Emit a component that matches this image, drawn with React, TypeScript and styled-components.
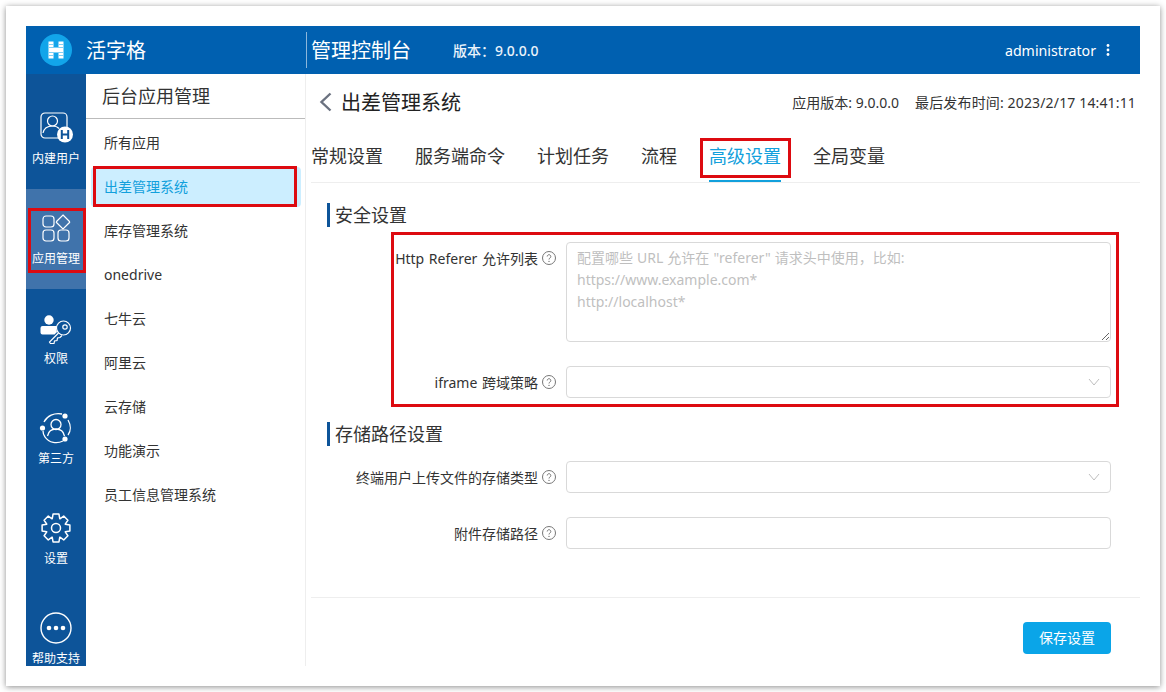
import React from 'react'
import styled, { createGlobalStyle } from 'styled-components'

const GlobalStyle = createGlobalStyle`
  html, body {
    margin: 0;
    padding: 0;
    background: #fff;
  }
  * {
    box-sizing: border-box;
  }
  body {
    font-family: "Noto Sans", "Noto Sans CJK SC", sans-serif;
    font-size: 14px;
    color: #333;
  }
`

const Frame = styled.div`
  margin: 6px;
  width: 1154px;
  height: 680px;
  padding: 20px;
  background: #fff;
  box-shadow: 0 1px 6px rgba(0, 0, 0, 0.45);
`

const Shell = styled.div`
  position: relative;
  width: 1114px;
  height: 640px;
  display: flex;
  flex-direction: column;
  overflow: hidden;
`

const Header = styled.header`
  flex: 0 0 48px;
  display: flex;
  align-items: center;
  background: #0060b0;
  color: #fff;
`

const Brand = styled.div`
  width: 280px;
  display: flex;
  align-items: center;
  padding: 0 0 1px 14px;
  gap: 14px;
  font-size: 20px;
`

const Console = styled.div`
  height: 36px;
  display: flex;
  align-items: center;
  border-left: 1px solid rgba(255, 255, 255, 0.55);
  padding: 0 0 2px 4px;
  font-size: 20px;
`

const Version = styled.span`
  margin-left: 42px;
  font-size: 14px;
  font-weight: 500;
  color: #eaf3fb;
`

const User = styled.div`
  margin-left: auto;
  padding-right: 30px;
  display: flex;
  align-items: center;
  gap: 10px;
  font-size: 14.2px;
`

const Body = styled.div`
  flex: 1;
  display: flex;
  min-height: 0;
`

const Rail = styled.nav`
  flex: 0 0 60px;
  padding-top: 15px;
  background: #0d5499;
  overflow: hidden;
`

const RailItem = styled.div<{ $active?: boolean }>`
  height: 100px;
  padding-top: 20px;
  display: flex;
  flex-direction: column;
  align-items: center;
  background: ${p => (p.$active ? '#4073ab' : 'transparent')};
  color: #fff;
`

const RailIcon = styled.div`
  height: 38px;
  display: flex;
  align-items: center;
  justify-content: center;
`

const RailLabel = styled.span`
  margin-top: 3px;
  font-size: 12px;
  line-height: 18px;
  white-space: nowrap;
`

const SidePanel = styled.aside`
  flex: 0 0 220px;
  border-right: 1px solid #eee;
`

const SideTitle = styled.div`
  height: 45px;
  padding: 0 0 3px 16px;
  display: flex;
  align-items: center;
  border-bottom: 1px solid #bbb;
  font-size: 18px;
`

const SideList = styled.div`
  padding-top: 4px;
  display: flex;
  flex-direction: column;
  gap: 4px;
`

const SideItem = styled.div<{ $active?: boolean }>`
  height: 40px;
  margin: 0 4px 0 5px;
  padding: 0 0 2px 13px;
  display: flex;
  align-items: center;
  border-radius: 4px;
  background: ${p => (p.$active ? '#cceeff' : 'transparent')};
  color: ${p => (p.$active ? '#12a0dc' : '#333')};
`

const Main = styled.main`
  flex: 1;
  padding-left: 5px;
  display: flex;
  flex-direction: column;
  min-width: 0;
`

const TitleRow = styled.div`
  flex: 0 0 58px;
  display: flex;
  align-items: center;
  padding: 0 4px 3px 8px;
`

const PageTitle = styled.h1`
  margin: 0 0 0 9px;
  font-size: 20px;
  font-weight: 400;
  color: #222;
`

const Meta = styled.div`
  margin-left: auto;
  display: flex;
  gap: 16px;
  color: #333;
`

const MetaItem = styled.span<{ $spread?: boolean }>`
  letter-spacing: ${p => (p.$spread ? '0.15px' : '0')};
`

const Tabs = styled.div`
  flex: 0 0 50px;
  display: flex;
  gap: 32px;
  border-bottom: 1px solid #eee;
`

const Tab = styled.div<{ $active?: boolean }>`
  height: 50px;
  line-height: 49px;
  font-size: 18px;
  color: ${p => (p.$active ? '#12a0dc' : '#333')};
  border-bottom: 2px solid ${p => (p.$active ? '#12a0dc' : 'transparent')};
`

const Content = styled.div`
  padding: 20px 0 0 16px;
`

const SectionTitle = styled.h2`
  margin: 0 0 15px;
  height: 24px;
  line-height: 25px;
  padding-left: 5px;
  border-left: 3px solid #0d5499;
  font-size: 18px;
  font-weight: 400;
`

const Row = styled.div`
  display: flex;
  gap: 10px;
  margin-bottom: 24px;
`

const Label = styled.div`
  width: 229px;
  height: 32px;
  display: flex;
  align-items: center;
  justify-content: flex-end;
  gap: 4px;
  padding-bottom: 1px;
  word-spacing: 1px;
  white-space: nowrap;
`

const Notes = styled.textarea`
  display: block;
  width: 545px;
  height: 100px;
  padding: 4px 10px;
  border: 1px solid #d9d9d9;
  border-radius: 4px;
  font-family: inherit;
  font-size: 14px;
  line-height: 22px;
  word-spacing: 0.4px;
  outline: none;
  &::placeholder {
    color: #bfbfbf;
    opacity: 1;
  }
`

const Field = styled.div`
  width: 545px;
  height: 32px;
  padding-right: 10px;
  display: flex;
  align-items: center;
  justify-content: flex-end;
  border: 1px solid #d9d9d9;
  border-radius: 4px;
  background: #fff;
`

const Footer = styled.div`
  margin-top: 24px;
  padding: 24px 29px 0 0;
  display: flex;
  justify-content: flex-end;
  border-top: 1px solid #eee;
`

const SaveButton = styled.button`
  width: 88px;
  height: 32px;
  padding: 0 0 2px;
  border: 0;
  border-radius: 4px;
  background: #0aa5e8;
  color: #fff;
  font-family: inherit;
  font-size: 14px;
`

const Highlight = styled.div<{ $x: number; $y: number; $w: number; $h: number }>`
  position: absolute;
  left: ${p => p.$x}px;
  top: ${p => p.$y}px;
  width: ${p => p.$w}px;
  height: ${p => p.$h}px;
  border: 3px solid #dd0a10;
  pointer-events: none;
`

const Logo = () => (
  <svg width="32" height="32" viewBox="0 0 32 32">
    <circle cx="16" cy="16" r="16" fill="#12a5ea" />
    <path d="M8.5 7.500h5V14h5V7.500h5v17h-5V18h-5v6.500h-5z" fill="#fff" />
    <path d="M8.500 10.500h5M18.500 10.500h5M8.500 13.500h15M8.500 18.500h15M8.500 21.500h5M18.500 21.500h5" stroke="#7fd0f5" strokeWidth="1" />
  </svg>
)

const UserIcon = () => (
  <svg width="34" height="32" viewBox="0 0 34 32" fill="none" stroke="#fff" strokeWidth="1.2">
    <path d="M22 26H6a4 4 0 0 1-4-4V5a4 4 0 0 1 4-4h18a4 4 0 0 1 4 4v13" />
    <circle cx="13.5" cy="9" r="5" />
    <path d="M4 21c1-5 5-7 9.5-7 2.5 0 5 .8 6.5 2.5" />
    <circle cx="26" cy="22.5" r="8" fill="#fff" stroke="none" />
    <path d="M22.8 18v9M29.2 18v9M22.8 22.5h6.4" stroke="#0d5499" strokeWidth="2" />
  </svg>
)

const AppsIcon = () => (
  <svg width="30" height="28" viewBox="0 0 30 28" fill="none" stroke="#fff" strokeWidth="1.2">
    <rect x="2" y="2" width="11" height="11" rx="3" />
    <rect x="2" y="16" width="11" height="11" rx="3" />
    <rect x="17" y="16" width="11" height="11" rx="3" />
    <path d="M22 1l6.5 6.5a.8.8 0 0 1 0 1L22 15l-6.5-6.500a.8.8 0 0 1 0-1z" />
  </svg>
)

const KeyIcon = () => (
  <svg width="32" height="32" viewBox="0 -3 32 32">
    <circle cx="9" cy="5" r="4.7" fill="#fff" />
    <path d="M2.5 11H17c-1 2-1 4 0 6l-2.5 2.500H2.500A2 2 0 0 1 .5 17.500V13a2 2 0 0 1 2-2z" fill="#fff" />
    <g fill="none" stroke="#fff" strokeWidth="1.2">
      <circle cx="23.5" cy="13" r="7" />
      <circle cx="25" cy="12" r="2.2" />
      <path d="M18.5 18l-9 9 1 1.500h3.500l.5-2.500 2.500-.5.5-2.500 2.500-.5 2-2" />
    </g>
  </svg>
)

const ThirdPartyIcon = () => (
  <svg width="34" height="34" viewBox="0 0 34 34" fill="none" stroke="#fff" strokeWidth="1.3">
    <path d="M5 11C8 5 15 1.5 23 3" />
    <path d="M29 9c3 5 3 11 0 15" />
    <path d="M24 30c-6 3-14 2-18-4-1.5-2-2-4-2-6" />
    <circle cx="17" cy="13.5" r="5" />
    <path d="M8.5 25c1-5 4.5-7 8.5-7s7.500 2 8.500 7" />
    <circle cx="26" cy="5" r="2.6" fill="#fff" stroke="none" />
    <circle cx="3.5" cy="17" r="2.6" fill="#fff" stroke="none" />
    <circle cx="26" cy="28" r="2.6" fill="#fff" stroke="none" />
  </svg>
)

// eight chunky teeth, computed so they stay evenly spaced
const gearPath = Array.from({ length: 8 }, (_, i) => {
  const at = (r: number, deg: number) => {
    const a = ((i * 45 + deg) * Math.PI) / 180
    return `${(15 + r * Math.cos(a)).toFixed(2)} ${(15 + r * Math.sin(a)).toFixed(2)}`
  }
  return `${i === 0 ? 'M' : 'L'}${at(10, -22)}L${at(14.2, -12)}L${at(14.2, 12)}L${at(10, 22)}`
}).join('') + 'Z'

const GearIcon = () => (
  <svg width="30" height="30" viewBox="0 0 30 30" fill="none" stroke="#fff" strokeWidth="1.5" strokeLinejoin="round">
    <path d={gearPath} />
    <circle cx="15" cy="15" r="4.5" />
  </svg>
)

const MoreIcon = () => (
  <svg width="32" height="32" viewBox="0 0 32 32">
    <circle cx="16" cy="16" r="15" fill="none" stroke="#fff" strokeWidth="1.4" />
    <circle cx="9" cy="16" r="2.3" fill="#fff" />
    <circle cx="16" cy="16" r="2.3" fill="#fff" />
    <circle cx="23" cy="16" r="2.3" fill="#fff" />
  </svg>
)

const HelpIcon = () => (
  <svg width="14" height="14" viewBox="0 0 14 14" fill="none" stroke="#777" strokeWidth="1">
    <circle cx="7" cy="7" r="6.5" />
    <path d="M5.2 5.500a1.800 1.800 0 1 1 2.800 1.500c-.6.4-1 .7-1 1.500" />
    <circle cx="7" cy="10.4" r=".7" fill="#777" stroke="none" />
  </svg>
)

const ChevronIcon = () => (
  <svg width="12" height="8" viewBox="0 0 12 8" fill="none" stroke="#bfbfbf" strokeWidth="1">
    <path d="M1 1l5 6 5-6" />
  </svg>
)

const BackIcon = () => (
  <svg width="13" height="20" viewBox="0 0 13 20" fill="none" stroke="#6b7280" strokeWidth="2.4">
    <path d="M11.5 1.5L2.500 10l9 8.500" />
  </svg>
)

const DotsIcon = () => (
  <svg width="4" height="12" viewBox="0 0 4 12" fill="#fff">
    <circle cx="2" cy="1.5" r="1.4" />
    <circle cx="2" cy="6" r="1.4" />
    <circle cx="2" cy="10.5" r="1.4" />
  </svg>
)

const railItems = [
  { label: '内建用户', icon: <UserIcon /> },
  { label: '应用管理', icon: <AppsIcon />, active: true },
  { label: '权限', icon: <KeyIcon /> },
  { label: '第三方', icon: <ThirdPartyIcon /> },
  { label: '设置', icon: <GearIcon /> },
  { label: '帮助支持', icon: <MoreIcon /> },
]

const sideItems = ['所有应用', '出差管理系统', '库存管理系统', 'onedrive', '七牛云', '阿里云', '云存储', '功能演示', '员工信息管理系统']

const tabs = ['常规设置', '服务端命令', '计划任务', '流程', '高级设置', '全局变量']

const placeholder = '配置哪些 URL 允许在 "referer" 请求头中使用，比如:\nhttps://www.example.com*\nhttp://localhost*'

const App = () => {
  return (
    <Frame>
      <GlobalStyle />
      <Shell>
        <Header>
          <Brand>
            <Logo />
            活字格
          </Brand>
          <Console>管理控制台</Console>
          <Version>版本：9.0.0.0</Version>
          <User>
            administrator
            <DotsIcon />
          </User>
        </Header>
        <Body>
          <Rail>
            {railItems.map(item => (
              <RailItem key={item.label} $active={item.active}>
                <RailIcon>{item.icon}</RailIcon>
                <RailLabel>{item.label}</RailLabel>
              </RailItem>
            ))}
          </Rail>
          <SidePanel>
            <SideTitle>后台应用管理</SideTitle>
            <SideList>
              {sideItems.map(item => (
                <SideItem key={item} $active={item === '出差管理系统'}>
                  {item}
                </SideItem>
              ))}
            </SideList>
          </SidePanel>
          <Main>
            <TitleRow>
              <BackIcon />
              <PageTitle>出差管理系统</PageTitle>
              <Meta>
                <MetaItem>应用版本: 9.0.0.0</MetaItem>
                <MetaItem $spread>最后发布时间: 2023/2/17 14:41:11</MetaItem>
              </Meta>
            </TitleRow>
            <Tabs>
              {tabs.map(tab => (
                <Tab key={tab} $active={tab === '高级设置'}>
                  {tab}
                </Tab>
              ))}
            </Tabs>
            <Content>
              <SectionTitle>安全设置</SectionTitle>
              <Row>
                <Label>
                  Http Referer 允许列表
                  <HelpIcon />
                </Label>
                <Notes placeholder={placeholder} />
              </Row>
              <Row>
                <Label>
                  iframe 跨域策略
                  <HelpIcon />
                </Label>
                <Field>
                  <ChevronIcon />
                </Field>
              </Row>
              <SectionTitle>存储路径设置</SectionTitle>
              <Row>
                <Label>
                  终端用户上传文件的存储类型
                  <HelpIcon />
                </Label>
                <Field>
                  <ChevronIcon />
                </Field>
              </Row>
              <Row>
                <Label>
                  附件存储路径
                  <HelpIcon />
                </Label>
                <Field />
              </Row>
            </Content>
            <Footer>
              <SaveButton>保存设置</SaveButton>
            </Footer>
          </Main>
        </Body>
        <Highlight $x={2} $y={182} $w={58} $h={65} />
        <Highlight $x={67} $y={140} $w={204} $h={41} />
        <Highlight $x={674} $y={112} $w={91} $h={40} />
        <Highlight $x={365} $y={206} $w={728} $h={175} />
      </Shell>
    </Frame>
  )
}

export default App
